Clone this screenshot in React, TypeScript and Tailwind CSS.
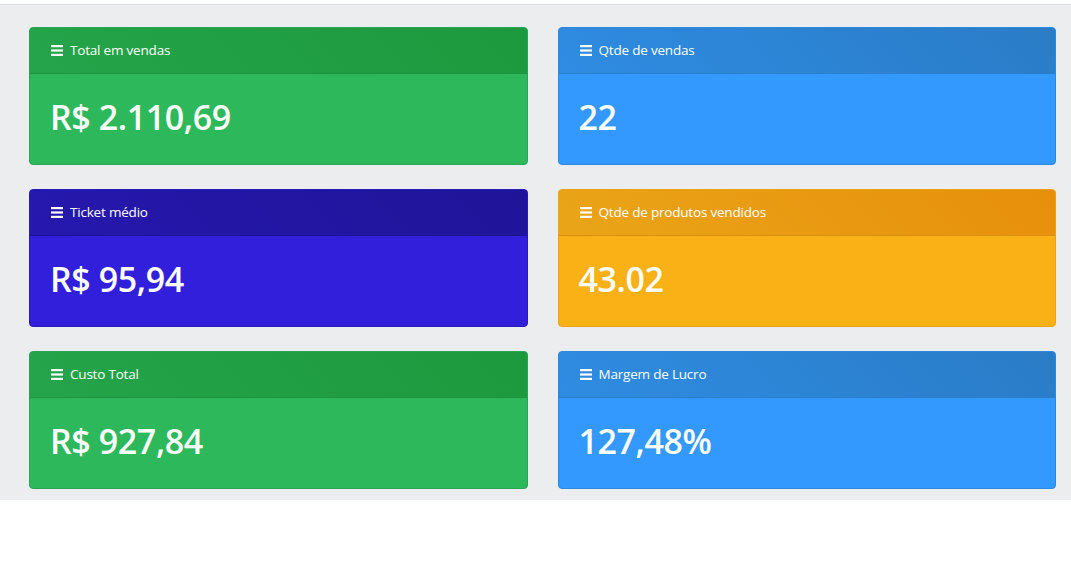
import React from "react";

type Card = {
  title: string;
  value: string;
  header: string;
  body: string;
  border: string;
};

const cards: Card[] = [
  {
    title: "Total em vendas",
    value: "R$ 2.110,69",
    header: "bg-[linear-gradient(45deg,#25a44b,#1d993d)] border-[#1f9440]",
    body: "bg-[#2eb85c]",
    border: "border-[#28a554]",
  },
  {
    title: "Qtde de vendas",
    value: "22",
    header: "bg-[linear-gradient(45deg,#2f8ce2,#2a7cc6)] border-[#2a7fcb]",
    body: "bg-[#3399ff]",
    border: "border-[#2d88e0]",
  },
  {
    title: "Ticket médio",
    value: "R$ 95,94",
    header: "bg-[linear-gradient(45deg,#2618ae,#1f1498)] border-[#1e1392]",
    body: "bg-[#321fdb]",
    border: "border-[#2a1ab8]",
  },
  {
    title: "Qtde de produtos vendidos",
    value: "43.02",
    header: "bg-[linear-gradient(45deg,#eaa518,#e78f0b)] border-[#d98f10]",
    body: "bg-[#f9b115]",
    border: "border-[#e7a313]",
  },
  {
    title: "Custo Total",
    value: "R$ 927,84",
    header: "bg-[linear-gradient(45deg,#25a44b,#1d993d)] border-[#1f9440]",
    body: "bg-[#2eb85c]",
    border: "border-[#28a554]",
  },
  {
    title: "Margem de Lucro",
    value: "127,48%",
    header: "bg-[linear-gradient(45deg,#2f8ce2,#2a7cc6)] border-[#2a7fcb]",
    body: "bg-[#3399ff]",
    border: "border-[#2d88e0]",
  },
];

function Bars() {
  return (
    <svg width="12" height="11" viewBox="0 0 12 11" className="shrink-0">
      <rect x="0" y="0" width="12" height="2.2" fill="white" />
      <rect x="0" y="4.4" width="12" height="2.2" fill="white" />
      <rect x="0" y="8.8" width="12" height="2.2" fill="white" />
    </svg>
  );
}

function StatCard({ c }: { c: Card }) {
  return (
    <div className={`rounded-[4px] border overflow-hidden h-[138px] flex flex-col ${c.border} ${c.body}`}>
      <div className={`h-[46px] shrink-0 border-b flex items-center gap-[7px] px-[21px] ${c.header}`}>
        <Bars />
        <span className="text-[13.5px] text-white leading-[21px] tracking-[-0.2px]">{c.title}</span>
      </div>
      <div className="flex-1 flex items-center px-[20px] pb-[4px]">
        <span className="text-[34px] font-semibold text-white leading-none tracking-[-0.4px]">{c.value}</span>
      </div>
    </div>
  );
}

export default function App() {
  return (
    <div className="w-[1071px] h-[575px] bg-white font-['Open_Sans','Noto_Sans',sans-serif]">
      <div className="h-[4px] bg-white" />
      <div className="h-[1px] bg-[#d8dbe0]" />
      <div className="bg-[#ebedef] h-[495px] pl-[29px] pr-[15px] pt-[22px]">
        <div className="grid grid-cols-2 gap-x-[30px] gap-y-[24px]">
          {cards.map((c) => (
            <StatCard key={c.title} c={c} />
          ))}
        </div>
      </div>
    </div>
  );
}
